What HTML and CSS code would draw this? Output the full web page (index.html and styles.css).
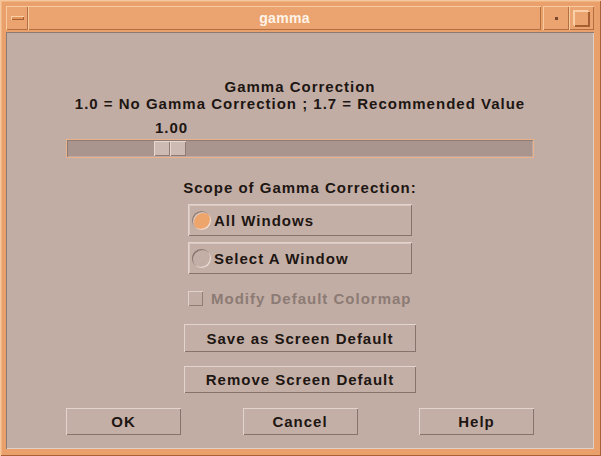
FILE: index.html
```html
<!DOCTYPE html>
<html>
<head>
<meta charset="utf-8">
<title>gamma</title>
<link rel="stylesheet" href="styles.css">
</head>
<body>
<div class="frame">
  <div class="titlebar">
    <div class="tb-btn tb-menu"><span class="menu-bar"></span></div>
    <div class="tb-title">gamma</div>
    <div class="tb-btn tb-min"><span class="min-dot"></span></div>
    <div class="tb-btn tb-max"><span class="max-box"></span></div>
  </div>
  <div class="content">
    <div class="heading">Gamma Correction</div>
    <div class="heading">1.0 = No Gamma Correction ; 1.7 = Recommended Value</div>
    <div class="slider">
      <div class="value-row"><span class="value" style="margin-left: 89px">1.00</span></div>
      <div class="trough">
        <span class="trough-fill" style="width: 87px"></span>
        <span class="thumb"><span class="thumb-half"></span><span class="thumb-half"></span></span>
      </div>
    </div>
    <div class="scope-label">Scope of Gamma Correction:</div>
    <div class="radio-group">
      <div class="radio-btn"><span class="radio on"></span><span>All Windows</span></div>
      <div class="radio-btn"><span class="radio"></span><span>Select A Window</span></div>
    </div>
    <div class="check-row"><span class="checkbox"></span><span>Modify Default Colormap</span></div>
    <div class="wide-btn save">Save as Screen Default</div>
    <div class="wide-btn remove">Remove Screen Default</div>
    <div class="footer">
      <div class="btn">OK</div>
      <div class="btn">Cancel</div>
      <div class="btn">Help</div>
    </div>
  </div>
</div>
</body>
</html>
```
FILE: styles.css
```css
* { box-sizing: border-box; }
html, body { margin: 0; padding: 0; }
body {
  width: 601px;
  height: 456px;
  overflow: hidden;
  background: #e9a06a;
  font-family: "Liberation Sans", Arial, sans-serif;
  font-weight: bold;
  font-size: 15px;
  color: #1d1612;
}
.frame {
  width: 601px;
  height: 456px;
  padding: 6px 7px 7px 6px;
  display: flex;
  flex-direction: column;
  background: #e9a06a;
  box-shadow: inset 1px 1px #f6c79c, inset -1px -1px #a96236, inset 2px 2px #f0b482;
}
.titlebar {
  height: 24px;
  display: flex;
}
.tb-btn, .tb-title {
  background: #eba46f;
  box-shadow: inset 1px 1px #f8caa0, inset -1px -1px #b36e42;
  display: flex;
  align-items: center;
  justify-content: center;
}
.tb-menu { width: 22px; }
.tb-title {
  flex: 1;
  color: #fff4ea;
  font-size: 14px;
  letter-spacing: 0.3px;
  padding-bottom: 1px;
}
.tb-min { width: 26px; margin-left: 2px; }
.tb-max { width: 25px; }
.menu-bar {
  width: 13px;
  height: 4px;
  background: #e49458;
  box-shadow: inset 1px 1px #f9cfa8, inset -1px -1px #a55f33;
}
.min-dot {
  width: 3px;
  height: 3px;
  background: #7a4a2c;
}
.max-box {
  width: 15px;
  height: 15px;
  box-shadow: inset 1px 1px #f9cfa8, inset -1px -1px #a55f33, 1px 1px #a55f33, -1px -1px #f9cfa8;
}
.content {
  margin-top: 2px;
  flex: 1;
  background: #c2ada5;
  box-shadow: inset 1px 1px #8d7a72, inset -1px -1px #e0d0c9;
  display: flex;
  flex-direction: column;
  align-items: center;
  padding-top: 46px;
  letter-spacing: 1px;
}
.heading {
  line-height: 17px;
  text-align: center;
}
.slider {
  width: 468px;
  margin-top: 7px;
  align-self: flex-start;
  margin-left: 60px;
}
.value-row {
  height: 17px;
  line-height: 17px;
  display: flex;
}
.trough {
  margin-top: 3px;
  height: 19px;
  background: #a9958e;
  border: 1px solid #eab28a;
  box-shadow: inset 1px 1px #8e7b74, inset -1px -1px #bba79f;
  display: flex;
  align-items: center;
}
.trough-fill { display: block; height: 1px; }
.thumb {
  display: flex;
  height: 15px;
}
.thumb-half {
  width: 16px;
  height: 15px;
  background: #cdbab2;
  box-shadow: inset 1px 1px #e6d8d1, inset -1px -1px #8f7b73;
}
.scope-label {
  margin-top: 21px;
  line-height: 17px;
}
.radio-group {
  margin-top: 8px;
  display: flex;
  flex-direction: column;
  gap: 6px;
}
.radio-btn {
  width: 224px;
  height: 32px;
  background: #c4afa7;
  box-shadow: inset 1px 1px #e3d4cd, inset -1px -1px #85736c, inset 2px 2px #d8c8c1;
  display: flex;
  align-items: center;
  padding-left: 4px;
  gap: 3px;
}
.radio {
  width: 19px;
  height: 19px;
  border-radius: 50%;
  box-shadow: inset 1px 1px #85736c, inset -1px -1px #e8dad3;
  background: transparent;
}
.radio.on {
  background: #eea56c;
  box-shadow: inset 1px 1px #8d7a72, inset -1px -1px #ebddd6, inset 2px 2px #d9c8c0;
}
.check-row {
  margin-top: 16px;
  width: 224px;
  display: flex;
  align-items: center;
  gap: 8px;
  color: #8c7b74;
  line-height: 17px;
  white-space: nowrap;
}
.checkbox {
  flex: none;
  width: 15px;
  height: 15px;
  box-shadow: inset 1px 1px #e0d1ca, inset -1px -1px #8f7d76;
}
.wide-btn {
  width: 232px;
  height: 28px;
  display: flex;
  align-items: center;
  justify-content: center;
  background: #c4afa7;
  box-shadow: inset 1px 1px #e3d4cd, inset -1px -1px #85736c;
}
.save { margin-top: 17px; }
.remove { margin-top: 14px; height: 27px; }
.footer {
  margin-top: 15px;
  width: 468px;
  display: flex;
  justify-content: space-between;
}
.btn {
  width: 115px;
  height: 27px;
  display: flex;
  align-items: center;
  justify-content: center;
  background: #c4afa7;
  box-shadow: inset 1px 1px #e3d4cd, inset -1px -1px #85736c;
}
```
